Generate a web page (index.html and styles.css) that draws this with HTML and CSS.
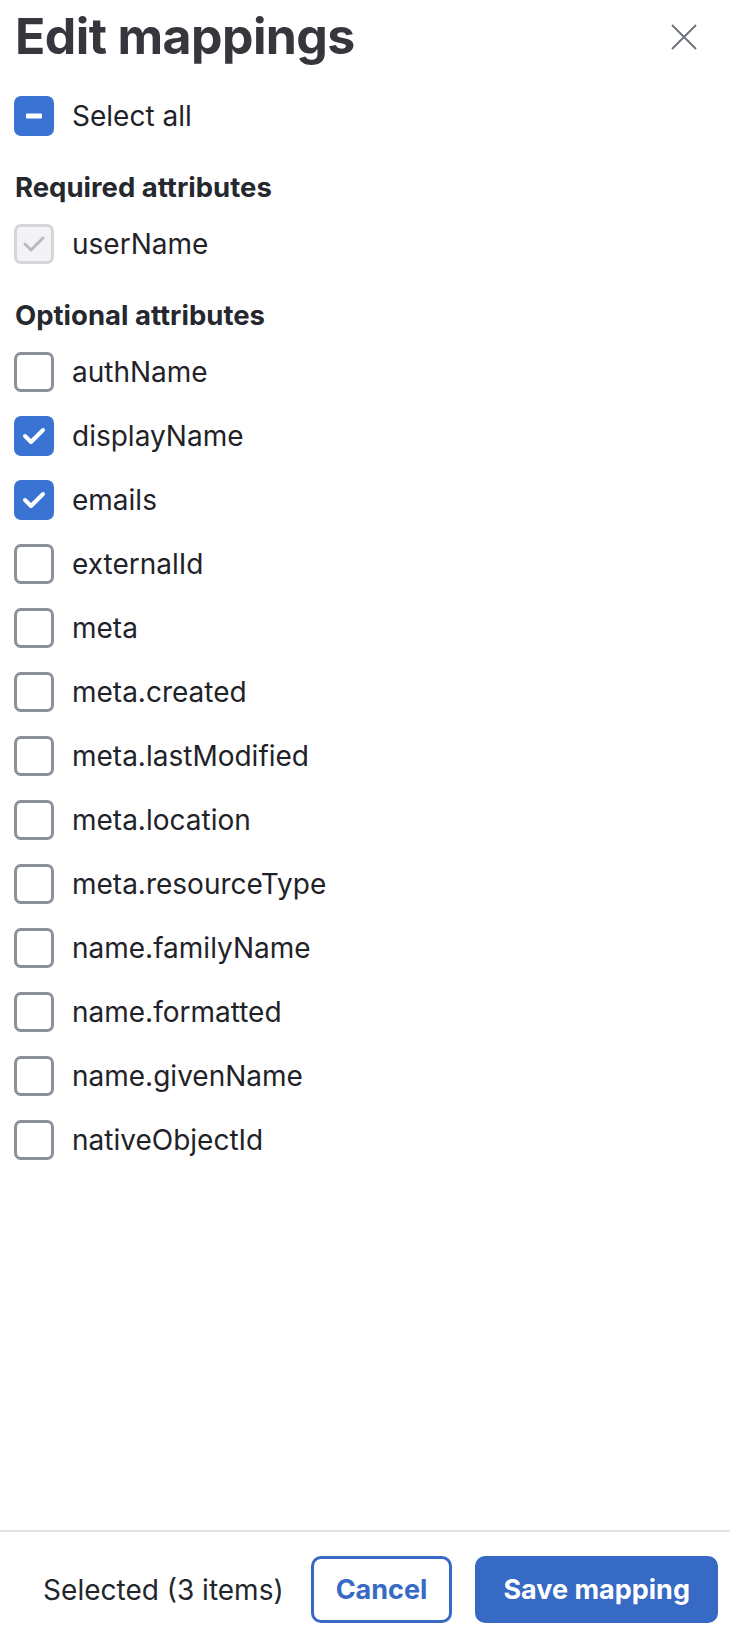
FILE: index.html
```html
<!DOCTYPE html>
<html lang="en">
<head>
    <meta charset="UTF-8">
    <meta name="viewport" content="width=device-width, initial-scale=1.0">
    <title>Edit mappings</title>
    <link rel="stylesheet" href="styles.css">
</head>
<body>
    <div class="panel">
        <div class="panel-body">
            <div class="header">
                <h1>Edit mappings</h1>
                <button class="close" aria-label="Close">
                    <svg width="26" height="26" viewBox="0 0 26 26">
                        <path d="M1 1 L25 25 M25 1 L1 25" stroke="#6f747c" stroke-width="2" fill="none"/>
                    </svg>
                </button>
            </div>

            <div class="row select-all">
                <span class="cb mixed">
                    <svg width="40" height="40" viewBox="0 0 40 40"><rect x="12" y="17.5" width="16" height="5" rx="1" fill="#fff"/></svg>
                </span>
                <span class="label">Select all</span>
            </div>

            <h2>Required attributes</h2>
            <div class="list">
                <div class="row">
                    <span class="cb disabled">
                        <svg width="40" height="40" viewBox="0 0 40 40"><path d="M11 20 L17 26 L29 14" stroke="#b7bac0" stroke-width="3" fill="none" stroke-linecap="round" stroke-linejoin="round"/></svg>
                    </span>
                    <span class="label">userName</span>
                </div>
            </div>

            <h2>Optional attributes</h2>
            <div class="list">
                <div class="row"><span class="cb"></span><span class="label">authName</span></div>
                <div class="row">
                    <span class="cb checked">
                        <svg width="40" height="40" viewBox="0 0 40 40"><path d="M11 20 L17 26 L29 14" stroke="#fff" stroke-width="4" fill="none" stroke-linecap="round" stroke-linejoin="round"/></svg>
                    </span>
                    <span class="label">displayName</span>
                </div>
                <div class="row">
                    <span class="cb checked">
                        <svg width="40" height="40" viewBox="0 0 40 40"><path d="M11 20 L17 26 L29 14" stroke="#fff" stroke-width="4" fill="none" stroke-linecap="round" stroke-linejoin="round"/></svg>
                    </span>
                    <span class="label">emails</span>
                </div>
                <div class="row"><span class="cb"></span><span class="label">externalId</span></div>
                <div class="row"><span class="cb"></span><span class="label">meta</span></div>
                <div class="row"><span class="cb"></span><span class="label">meta.created</span></div>
                <div class="row"><span class="cb"></span><span class="label">meta.lastModified</span></div>
                <div class="row"><span class="cb"></span><span class="label">meta.location</span></div>
                <div class="row"><span class="cb"></span><span class="label">meta.resourceType</span></div>
                <div class="row"><span class="cb"></span><span class="label">name.familyName</span></div>
                <div class="row"><span class="cb"></span><span class="label">name.formatted</span></div>
                <div class="row"><span class="cb"></span><span class="label">name.givenName</span></div>
                <div class="row"><span class="cb"></span><span class="label">nativeObjectId</span></div>
            </div>
        </div>

        <div class="footer">
            <span class="count">Selected (3 items)</span>
            <button class="btn btn-outline">Cancel</button>
            <button class="btn btn-primary">Save mapping</button>
        </div>
    </div>
</body>
</html>
```

FILE: styles.css
```css
* {
    box-sizing: border-box;
}

body {
    margin: 0;
    font-family: Inter, "Noto Sans", sans-serif;
    color: #1f2329;
    background: #fff;
}

.panel {
    height: 100vh;
    display: flex;
    flex-direction: column;
}

.panel-body {
    flex: 1;
    padding: 6px 14px 0 14px;
}

.header {
    display: flex;
    justify-content: space-between;
    align-items: flex-start;
}

h1 {
    margin: 0 0 0 1px;
    font-size: 50px;
    line-height: 60px;
    font-weight: 700;
    letter-spacing: -0.6px;
    color: #35373d;
}

.close {
    background: none;
    border: none;
    padding: 0;
    margin: 18px 19px 0 0;
    width: 26px;
    height: 26px;
    cursor: pointer;
}

.close svg {
    display: block;
}

h2 {
    margin: 35px 0 20px 1px;
    font-size: 27.5px;
    line-height: 33px;
    font-weight: 700;
    color: #25282e;
}

.select-all {
    margin-top: 30px;
}

.list {
    display: flex;
    flex-direction: column;
    gap: 24px;
}

.row {
    display: flex;
    align-items: center;
    gap: 18px;
    height: 40px;
}

.label {
    font-size: 28px;
    line-height: 40px;
    color: #1f2329;
}

.cb {
    width: 40px;
    height: 40px;
    flex: none;
    border: 3px solid #8b9099;
    border-radius: 7px;
    background: #fff;
    position: relative;
}

.cb svg {
    position: absolute;
    top: -3px;
    left: -3px;
}

.cb.checked,
.cb.mixed {
    background: #3b73d4;
    border-color: #3b73d4;
}

.cb.disabled {
    background: #f3f3f5;
    border-color: #d5d6da;
}

.footer {
    border-top: 2px solid #e4e4e8;
    display: flex;
    justify-content: flex-end;
    align-items: center;
    padding: 24px 12px 13px 12px;
}

.count {
    font-size: 28px;
    color: #23262b;
    margin-right: 27px;
}

.btn {
    height: 67px;
    padding: 0 22px;
    border-radius: 10px;
    border: 3px solid #376ac5;
    font-family: Inter, "Noto Sans", sans-serif;
    font-size: 27px;
    font-weight: 700;
    cursor: pointer;
}

.btn-outline {
    background: #fff;
    color: #376ac5;
}

.btn-primary {
    background: #376ac5;
    color: #fff;
    margin-left: 23px;
    padding: 0 25px;
}
```
